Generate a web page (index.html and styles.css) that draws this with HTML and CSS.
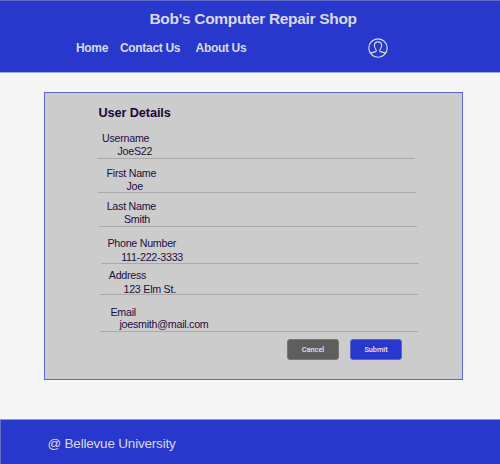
FILE: index.html
```html
<!DOCTYPE html>
<html lang="en">
<head>
<meta charset="utf-8">
<title>Bob's Computer Repair Shop</title>
<link rel="stylesheet" href="styles.css">
</head>
<body>
<header class="header">
  <h1 class="title">Bob's Computer Repair Shop</h1>
  <nav class="nav">
    <a class="home">Home</a>
    <a class="contact">Contact Us</a>
    <a class="about">About Us</a>
    <svg class="user" viewBox="0 0 20 20" fill="none" stroke="currentColor" stroke-width="1.15">
      <circle cx="10" cy="10" r="9.2"/>
      <path d="M2.8 15.2C4.6 14.1 7.7 14 8.2 13.1C8.5 12.4 8.1 11.7 7.6 11C6.7 9.8 6.3 8.4 6.4 6.9C6.5 4.9 8 3.8 10 3.8S13.5 4.9 13.6 6.9C13.7 8.4 13.3 9.8 12.4 11C11.9 11.7 11.5 12.4 11.8 13.1C12.3 14 15.4 14.1 17.2 15.2"/>
    </svg>
  </nav>
</header>
<main class="panel">
  <h2 class="heading">User Details</h2>
  <dl class="fields">
    <div class="field username"><dt>Username</dt><dd>JoeS22</dd></div>
    <div class="field first"><dt>First Name</dt><dd>Joe</dd></div>
    <div class="field last"><dt>Last Name</dt><dd>Smith</dd></div>
    <div class="field phone"><dt>Phone Number</dt><dd>111-222-3333</dd></div>
    <div class="field address"><dt>Address</dt><dd>123 Elm St.</dd></div>
    <div class="field email"><dt>Email</dt><dd>joesmith@mail.com</dd></div>
  </dl>
  <div class="actions">
    <button class="button cancel">Cancel</button>
    <button class="button submit">Submit</button>
  </div>
</main>
<footer class="footer">@ Bellevue University</footer>
</body>
</html>
```
FILE: styles.css
```css
* { box-sizing: border-box; }
body {
  margin: 0;
  height: 464px;
  display: flex;
  flex-direction: column;
  overflow: hidden;
  background: #f5f5f5;
  font-family: "Liberation Sans", Arial, sans-serif;
}
h1, h2, dl, dt, dd { margin: 0; }
.header {
  height: 73px;
  flex: none;
  background: #2838cc;
  border-top: 1px solid #5d68c9;
  border-bottom: 1px solid #a0a8e4;
  color: #d9d9e0;
}
.title {
  margin: 9px 0 0 149.5px;
  font-size: 15.5px;
  letter-spacing: -0.32px;
  line-height: 18px;
  white-space: nowrap;
}
.nav {
  display: flex;
  align-items: center;
  height: 20px;
  margin: 10px 0 0 76px;
  font-size: 12px;
  letter-spacing: -0.33px;
  font-weight: bold;
  line-height: 20px;
}
.contact { margin-left: 12px; }
.about { margin-left: 15.5px; }
.user { width: 20px; height: 20px; margin-left: auto; margin-right: 112px; }
.panel {
  width: 419px;
  height: 288px;
  flex: none;
  margin: 19px 0 0 44px;
  border: 1px solid #5a68cc;
  background: #ccc;
  color: #240c40;
}
.heading {
  margin: 12px 0 0 53.4px;
  font-size: 12.7px;
  letter-spacing: -0.08px;
  line-height: 16px;
  color: #1c0638;
}
.fields { margin-top: 11px; font-size: 10.7px; letter-spacing: -0.26px; line-height: 13px; }
.field {
  width: 318px;
  display: flex;
  flex-direction: column;
  border-bottom: 1px solid #a9a9a9;
  white-space: nowrap;
}
.username { height: 27px; margin-left: 52px; }
.username dt { margin-left: 5px; }
.username dd { margin-left: 20.5px; }
.first { height: 34px; margin-left: 53px; padding-top: 8px; }
.first dt { margin-left: 8.5px; }
.first dd { margin-left: 28.5px; }
.last { height: 34px; margin-left: 54px; padding-top: 7px; }
.last dt { margin-left: 7.7px; }
.last dd { margin-left: 25px; }
.phone { height: 37px; margin-left: 56px; padding-top: 10px; }
.phone dt { margin-left: 6.4px; }
.phone dd { margin: 1px 0 0 20.2px; }
.address { height: 31px; margin-left: 55px; padding-top: 5px; }
.address dt { margin-left: 8.8px; }
.address dd { margin: 1px 0 0 23.5px; }
.email { height: 37px; margin-left: 55px; padding-top: 11px; }
.email dt { margin-left: 10.5px; }
.email dd { margin: -1px 0 0 19.5px; }
.actions { display: flex; gap: 11px; margin: 7px 0 0 242px; }
.button {
  width: 52px;
  height: 21px;
  padding: 0;
  border: 1px solid #777;
  border-radius: 3px;
  color: #e8e8e8;
  font: 500 7.3px/19px Roboto, sans-serif;
  letter-spacing: 0;
}
.cancel { background: #5e5e5e; }
.submit { background: #2838cc; border-color: #5965cb; }
.footer {
  height: 45px;
  flex: none;
  margin-top: auto;
  padding: 14px 0 0 46.5px;
  border-top: 1px solid #8f98df;
  border-left: 1px solid #6670cc;
  background: #2838cc;
  color: #d9d9e0;
  font-size: 13.5px;
  letter-spacing: -0.2px;
  line-height: 20px;
}
```
